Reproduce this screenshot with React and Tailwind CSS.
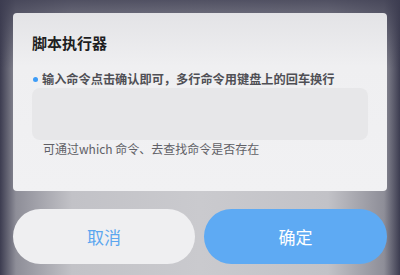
import React from "react";

export default function App() {
  const font = { fontFamily: '"Noto Sans CJK SC", "Noto Sans", sans-serif' };
  return (
    <div
      className="w-[400px] h-[275px] overflow-hidden flex flex-col px-[13px] pt-[13px] bg-[linear-gradient(to_bottom,rgba(60,60,80,0.85)_0%,rgba(60,60,80,0)_25%),linear-gradient(to_right,#3c3c50_0%,#8e8e98_4%,#c2c2c7_18%,#cacace_50%,#c2c2c7_82%,#8e8e98_96%,#3c3c50_100%)]"
      style={font}
    >
      <div className="h-[178px] rounded-[4px] bg-[linear-gradient(to_bottom,#e3e3e6_0%,#efeff1_30%,#f1f1f3_100%)] px-[19px] pt-[20px] flex flex-col">
        <div className="text-[15px] leading-[20px] font-bold text-[#1e1e22]">脚本执行器</div>
        <div className="mt-[19px] flex items-center gap-[4px] pl-[1px]">
          <div className="w-[5px] h-[5px] rounded-full bg-[#3d9cf7]" />
          <div className="text-[12.2px] leading-[14px] font-bold text-[#4f4f55]">
            输入命令点击确认即可，多行命令用键盘上的回车换行
          </div>
        </div>
        <div className="mt-[2px] h-[52px] rounded-[8px] bg-[#e7e7e9]" />
        <div className="mt-[2px] pl-[11px] text-[12px] leading-[14px] text-[#606066]">
          可通过which 命令、去查找命令是否存在
        </div>
      </div>
      <div className="mt-[18px] flex gap-[9px]">
        <div className="w-[182px] h-[55px] rounded-full bg-[#efeff1] flex items-center justify-center text-[17px] text-[#5ba6ef]">
          取消
        </div>
        <div className="w-[183px] h-[55px] rounded-full bg-[#5eaaf3] flex items-center justify-center text-[17px] text-white">
          确定
        </div>
      </div>
    </div>
  );
}
